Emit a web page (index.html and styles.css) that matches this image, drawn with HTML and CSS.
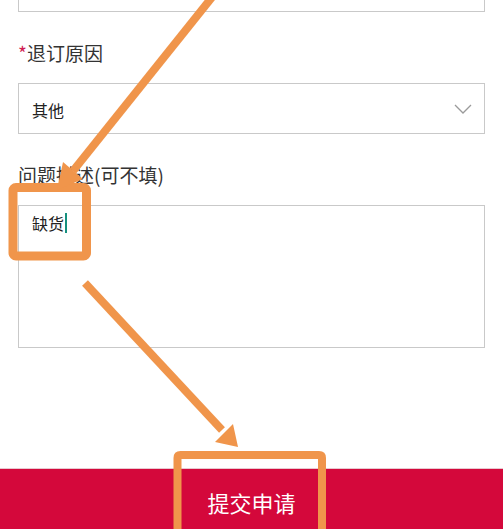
FILE: index.html
```html
<!DOCTYPE html>
<html lang="zh-CN">
<head>
<meta charset="utf-8">
<title>退订申请</title>
<link rel="stylesheet" href="styles.css">
</head>
<body>
<div class="page">
  <main class="form">
    <div class="field-prev"></div>
    <div class="label"><span class="req">*</span>退订原因</div>
    <div class="select">
      <span class="select-value">其他</span>
      <svg class="chevron" width="18" height="10" viewBox="0 0 18 10"><path d="M1 1 L9 9 L17 1" fill="none" stroke="#9a9a9a" stroke-width="1.3"/></svg>
    </div>
    <div class="label">问题描述(可不填)</div>
    <div class="textarea">缺货<span class="caret"></span></div>
  </main>
  <footer class="submit">提交申请</footer>
  <svg class="annotations" width="503" height="529" viewBox="0 0 503 529">
    <g fill="none" stroke="#f0954b" stroke-width="8">
      <line x1="213" y1="-4" x2="73" y2="171"/>
      <rect x="13" y="187.5" width="73.5" height="68.5" rx="3" stroke-width="9"/>
      <line x1="85" y1="283" x2="222" y2="430"/>
      <path d="M177.5 540 V458 Q177.5 455 180.5 455 H319 Q322 455 322 458 V540"/>
    </g>
    <g fill="#f0954b">
      <polygon points="57,190 83,179 63,162"/>
      <polygon points="238,447 215,442 233,424"/>
    </g>
  </svg>
</div>
</body>
</html>
```

FILE: styles.css
```css
html, body {
  margin: 0;
  padding: 0;
  background: #ffffff;
}

body {
  font-family: "Noto Sans CJK SC", "Noto Sans", sans-serif;
  color: #333333;
}

.page {
  position: relative;
  height: 529px;
  display: flex;
  flex-direction: column;
  overflow: hidden;
}

.form {
  flex: 1;
  padding: 0 18px;
}

.field-prev {
  height: 11px;
  border: 1px solid #c9c9c9;
  border-top: none;
}

.label {
  margin: 28px 0 17px;
  font-size: 19px;
  line-height: 26px;
  color: #333333;
}

.req {
  color: #d01c52;
}

.select {
  height: 49px;
  border: 1px solid #c9c9c9;
  padding: 0 12px 0 13px;
  display: flex;
  align-items: center;
  justify-content: space-between;
}

.select-value {
  font-size: 16px;
  line-height: 22px;
  color: #222222;
  padding-top: 2px;
}

.chevron {
  display: block;
}

.textarea {
  height: 129px;
  border: 1px solid #c9c9c9;
  padding: 6px 13px;
  font-size: 16px;
  line-height: 22px;
  color: #222222;
}

.caret {
  display: inline-block;
  width: 2px;
  height: 20px;
  margin-left: 1px;
  vertical-align: -3px;
  background: #15907e;
}

.submit {
  flex: none;
  height: 61px;
  line-height: 66px;
  overflow: hidden;
  background: #d4083b;
  color: #ffffff;
  font-size: 22px;
  text-align: center;
  border-top: 1px solid #e8c8d0;
  box-sizing: border-box;
}

.annotations {
  position: absolute;
  top: 0;
  left: 0;
  pointer-events: none;
}
```
